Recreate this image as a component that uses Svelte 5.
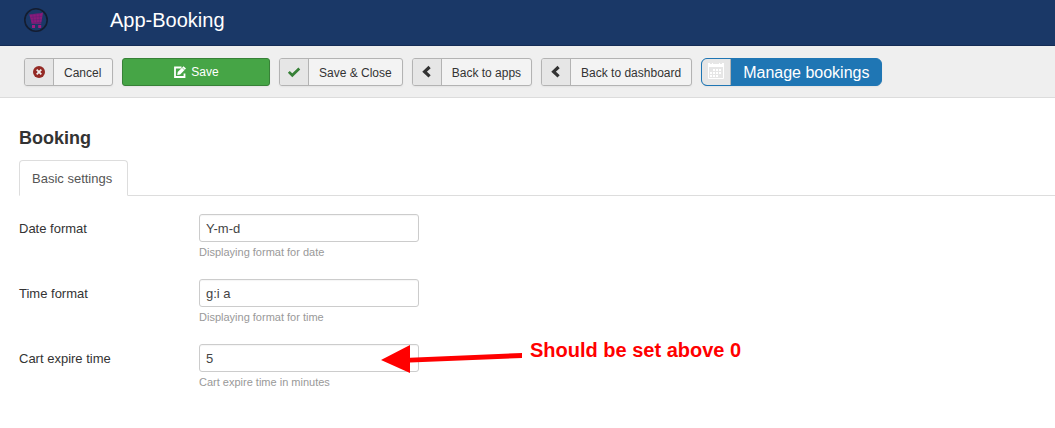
<script>
  const fields = $state([
    { id: 'date-format', label: 'Date format', value: 'Y-m-d', help: 'Displaying format for date' },
    { id: 'time-format', label: 'Time format', value: 'g:i a', help: 'Displaying format for time' },
    { id: 'cart-expire', label: 'Cart expire time', value: '5', help: 'Cart expire time in minutes', note: 'Should be set above 0' }
  ]);
</script>

<header>
  <svg class="logo" viewBox="0 0 24 24" aria-hidden="true">
    <circle cx="12" cy="12" r="11.2" fill="none" stroke="#141d30" stroke-width="1.6" />
    <path d="M5.3 6.5 16.5 5.2 19 4.4 17.4 14.5 7.6 15Z" fill="#8a1b7b" />
    <path d="M5.5 6.8 16.7 5.4M6.3 9.4 18 8.3M7 12 17.7 11.3M8.7 6.5 10 14.8M12 6 12.7 14.6M15.2 5.6 15.4 14.5" stroke="#5d2173" stroke-width=".5" />
    <path d="M7.5 15.4H17.3" stroke="#8e1b7b" stroke-width=".8" />
    <path d="M8 17h3v3H8ZM14.2 17h3v3h-3Z" fill="#a01b80" />
  </svg>
  <span class="title">App-Booking</span>
</header>

<nav class="toolbar" aria-label="Toolbar">
  <button type="button">
    <span class="icon"><svg viewBox="0 0 14 14"><circle cx="7" cy="7" r="6" fill="#942a25" /><path d="m4.7 4.7 4.6 4.6m0-4.6L4.7 9.3" stroke="#eee" stroke-width="1.8" /></svg></span>
    <span class="text">Cancel</span>
  </button>
  <button type="button" class="save">
    <svg viewBox="0 0 14 14"><path d="M8.5 2.5H2V12h9.5V8.5" fill="none" stroke="#fff" stroke-width="1.8" /><path d="m4.2 10 .5-3L10.5 1.2 13 3.6 7.2 9.4Z" fill="#fff" /><path d="m9.2 2.6 2.4 2.4" stroke="#46a546" stroke-width=".6" /></svg>
    <span>Save</span>
  </button>
  <button type="button">
    <span class="icon"><svg viewBox="0 0 14 14"><path d="m1.8 6.9 3.5 3.4 7-6.8" fill="none" stroke="#378137" stroke-width="2.7" /></svg></span>
    <span class="text">Save &amp; Close</span>
  </button>
  {#each ['Back to apps', 'Back to dashboard'] as label}
    <button type="button">
      <span class="icon"><svg viewBox="0 0 14 14"><path d="M9.6 2 4.6 6.7 9.6 11.4" fill="none" stroke="#333" stroke-width="3.2" /></svg></span>
      <span class="text">{label}</span>
    </button>
  {/each}
  <button type="button" class="manage">
    <span class="icon"><svg class="calendar" viewBox="0 0 16 16"><path d="M0 0H2v1h2V0h1v1h6V0h1v1h2V0h2v4H0Z" fill="#fff" /><path d="M.5 4v11.5h15V4" fill="none" stroke="#fff" /><path d="M5 6h2v2H5ZM8 6h2v2H8ZM11 6h2v2h-2ZM2 9h2v2H2ZM5 9h2v2H5ZM8 9h2v2H8ZM11 9h2v2h-2ZM2 12h2v2H2ZM5 12h2v2H5ZM8 12h2v2H8Z" fill="#fff" /></svg></span>
    <span class="text">Manage bookings</span>
  </button>
</nav>

<main>
  <h1>Booking</h1>
  <div class="tabs" role="tablist">
    <button type="button" role="tab" aria-selected="true">Basic settings</button>
  </div>
  <form>
    {#each fields as field}
      <div class="field">
        <label for={field.id}>{field.label}</label>
        <div class="control">
          <input id={field.id} type="text" bind:value={field.value} aria-describedby="{field.id}-help" />
          <p id="{field.id}-help">{field.help}</p>
          {#if field.note}
            <div class="note">
              <svg viewBox="0 0 142 30" aria-hidden="true"><path d="M0 16 29 1V13.8L141 9V14L29 18.6V29Z" fill="#f00" /></svg>
              <strong>{field.note}</strong>
            </div>
          {/if}
        </div>
      </div>
    {/each}
  </form>
</main>

<style>
  :global(body) {
    margin: 0;
    background: #fff;
    color: #333;
    font: 13px/18px "Liberation Sans", Arial, sans-serif;
  }

  header {
    display: flex;
    align-items: center;
    gap: 62px;
    padding: 5px 24px 10px;
    background: #1a3867;
    border-bottom: 1px solid #142c55;
  }

  .logo {
    width: 24px;
    height: 24px;
  }

  .title {
    color: #fff;
    font-size: 20px;
    line-height: 30px;
  }

  .toolbar {
    display: flex;
    flex-wrap: wrap;
    gap: 9px;
    padding: 12px 24px 11px;
    background: #efefef;
    border-bottom: 1px solid #dcdcdc;
  }

  .toolbar button {
    display: flex;
    box-sizing: border-box;
    min-width: 89px;
    height: 28px;
    padding: 0;
    overflow: hidden;
    border: 1px solid #b3b3b3;
    border-radius: 3px;
    background: #f3f3f3;
    box-shadow: 0 1px 2px rgba(0, 0, 0, 0.05);
    color: #333;
    font: 12px/28px "Liberation Sans", Arial, sans-serif;
    white-space: nowrap;
  }

  .toolbar svg {
    width: 14px;
    height: 14px;
  }

  .icon {
    display: flex;
    flex: none;
    justify-content: center;
    width: 29px;
    height: 26px;
    padding-top: 6px;
    box-sizing: border-box;
    border-right: 1px solid #b3b3b3;
    background: #e6e6e6;
  }

  .text {
    padding: 0 10px;
  }

  .toolbar .save {
    align-items: center;
    justify-content: center;
    gap: 4px;
    width: 148px;
    border-color: #378137;
    background: #46a546;
    color: #fff;
  }

  .toolbar .manage {
    border-color: #1f76b4;
    border-radius: 6px;
    background: #1f76b4;
    color: #fff;
    font-size: 16px;
  }

  .manage .icon {
    padding-top: 4px;
  }

  .manage .text {
    padding: 0 12px;
  }

  .toolbar .calendar {
    width: 16px;
    height: 16px;
  }

  main {
    padding: 22px 0 20px 19px;
  }

  h1 {
    margin: 0 0 4px;
    font-size: 18px;
    line-height: 36px;
  }

  .tabs {
    display: flex;
    border-bottom: 1px solid #ddd;
  }

  .tabs button {
    margin-bottom: -1px;
    padding: 9px 15px 7px 12px;
    border: 1px solid #ddd;
    border-bottom-color: #fff;
    border-radius: 4px 4px 0 0;
    background: #fff;
    color: #555;
    font: inherit;
  }

  form {
    padding-top: 18px;
  }

  .field {
    display: flex;
    margin-bottom: 18px;
  }

  label {
    width: 180px;
    padding-top: 6px;
  }

  .control {
    position: relative;
  }

  input {
    display: block;
    box-sizing: border-box;
    width: 220px;
    height: 28px;
    padding: 4px 6px;
    border: 1px solid #ccc;
    border-radius: 3px;
    background: #fff;
    box-shadow: inset 0 1px 1px rgba(0, 0, 0, 0.04);
    color: #444;
    font: inherit;
  }

  p {
    margin: 1px 0 0;
    color: #999;
    font-size: 11px;
  }

  .note {
    position: absolute;
    top: 0;
    left: 182px;
    display: flex;
    gap: 7px;
    color: #f00;
    font-size: 20px;
    line-height: 12px;
    white-space: nowrap;
  }

  .note svg {
    width: 142px;
    height: 30px;
  }
</style>
